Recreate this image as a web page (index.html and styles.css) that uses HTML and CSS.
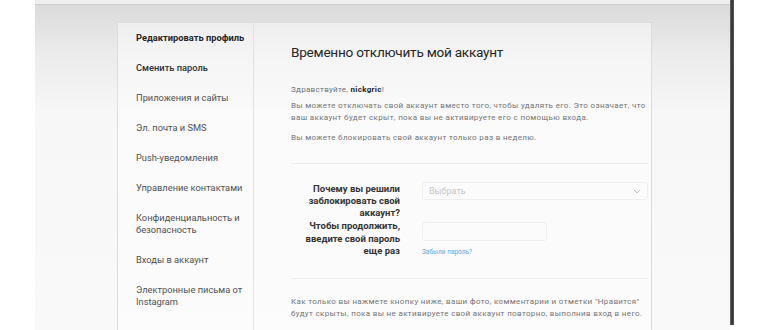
FILE: index.html
```html
<!DOCTYPE html>
<html lang="ru">
<head>
  <meta charset="UTF-8">
  <title>Временно отключить мой аккаунт</title>
  <link rel="stylesheet" href="styles.css">
</head>
<body>
  <div class="screen">
    <div class="window">
      <div class="topbar"></div>
      <div class="page">
        <div class="card">
          <nav class="side">
            <a class="active">Редактировать профиль</a>
            <a class="strong">Сменить пароль</a>
            <a>Приложения и сайты</a>
            <a>Эл. почта и SMS</a>
            <a>Push-уведомления</a>
            <a>Управление контактами</a>
            <a>Конфиденциальность и безопасность</a>
            <a>Входы в аккаунт</a>
            <a>Электронные письма от Instagram</a>
          </nav>

          <main class="main">
            <h1>Временно отключить мой аккаунт</h1>
            <p class="hello">Здравствуйте, <b>nickgric</b>!</p>
            <p class="text">Вы можете отключать свой аккаунт вместо того, чтобы удалять его. Это означает, что ваш аккаунт будет скрыт, пока вы не активируете его с помощью входа.</p>
            <p class="text">Вы можете блокировать свой аккаунт только раз в неделю.</p>

            <div class="form">
              <div class="row">
                <label>Почему вы решили заблокировать свой аккаунт?</label>
                <div class="field">
                  <div class="select">
                    <span>Выбрать</span>
                    <svg width="8" height="5" viewBox="0 0 8 5"><path d="M1 1l3 3 3-3" fill="none" stroke="#c4c4c4" stroke-width="1"/></svg>
                  </div>
                </div>
              </div>
              <div class="row">
                <label>Чтобы продолжить, введите свой пароль еще раз</label>
                <div class="field">
                  <input type="password" class="pass">
                  <a class="forgot">Забыли пароль?</a>
                </div>
              </div>
            </div>

            <p class="text">Как только вы нажмете кнопку ниже, ваши фото, комментарии и отметки "Нравится" будут скрыты, пока вы не активируете свой аккаунт повторно, выполнив вход в него.</p>
          </main>
        </div>
      </div>
    </div>
    <div class="edge"></div>
  </div>
</body>
</html>
```

FILE: styles.css
```css
body {
  margin: 0;
  background-color: #ffffff;
  font-family: Roboto, "Liberation Sans", Arial, sans-serif;
  color: #262626;
  overflow: hidden;
}
.screen {
  display: flex;
  height: 330px;
  padding-left: 35px;
}
.window {
  width: 695px;
  height: 330px;
  display: flex;
  flex-direction: column;
}
.topbar {
  height: 4px;
  background-color: #efefef;
  border-bottom: 1px solid #cfcfcf;
}
.page {
  flex: 1;
  padding: 17px 0 0 82px;
  background: linear-gradient(#dadada 0px, #ececec 50px, #f7f7f7 110px, #f9f9f9 100%);
  overflow: hidden;
}
.edge {
  width: 4px;
  height: 325px;
  background: linear-gradient(90deg, #6a6a6a, #2e2e2e 50%, #5a5a5a);
}
.card {
  display: flex;
  width: 533px;
  height: 330px;
  border: 1px solid #dddddd;
  background-color: rgba(255, 255, 255, 0.45);
}
.side {
  width: 117px;
  flex-shrink: 0;
  padding-left: 18px;
  border-right: 1px solid #e2e2e2;
  display: flex;
  flex-direction: column;
}
.side a {
  display: block;
  padding: 9px 0;
  font-size: 9.3px;
  line-height: 12px;
  color: #505050;
}
.side a.active {
  color: #262626;
  font-weight: 700;
  padding-top: 8.5px;
}
.side a.strong {
  color: #2f2f2f;
  font-weight: 500;
}
.main {
  flex: 1;
  padding: 20px 18px 0 37px;
}
h1 {
  margin: 0 0 23px;
  font-size: 13.6px;
  line-height: 18px;
  letter-spacing: -0.25px;
  font-weight: 400;
  color: #262626;
}
.hello {
  margin: 0 0 4px;
  font-size: 8px;
  line-height: 12px;
  letter-spacing: 0.3px;
  color: #6f6f6f;
}
.hello b {
  color: #262626;
}
.text {
  margin: 0 0 8px;
  font-size: 8px;
  line-height: 12px;
  letter-spacing: 0.35px;
  color: #737373;
}
.form {
  margin: 19px 0 17px;
  padding: 19px 0 20px;
  border-top: 1px solid #ececec;
  border-bottom: 1px solid #ececec;
}
.row {
  display: flex;
  gap: 22px;
}
.row label {
  width: 109px;
  flex-shrink: 0;
  text-align: right;
  font-size: 9.5px;
  line-height: 12px;
  font-weight: 700;
  color: #333333;
}
.row + .row label {
  padding-top: 1px;
  line-height: 12.5px;
}
.field {
  display: flex;
  flex-direction: column;
  align-items: flex-start;
}
.select {
  box-sizing: border-box;
  width: 226px;
  height: 18px;
  margin-top: -1px;
  padding: 0 6px;
  display: flex;
  align-items: center;
  justify-content: space-between;
  border: 1px solid #efefef;
  border-radius: 3px;
  background-color: #fbfbfb;
  font-size: 9px;
  color: #c6c6c6;
}
.pass {
  box-sizing: border-box;
  width: 125px;
  height: 19px;
  margin: 3px 0 6px;
  border: 1px solid #efefef;
  border-radius: 3px;
  background-color: #fbfbfb;
}
.forgot {
  font-size: 6.5px;
  line-height: 10px;
  color: #57a9dc;
}
```
